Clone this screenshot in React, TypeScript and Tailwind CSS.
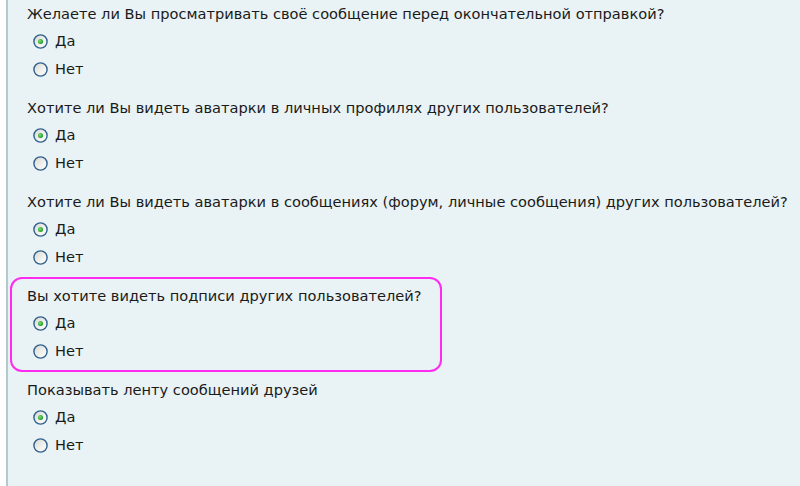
import React from 'react';

type Question = { text: string; highlight?: boolean };

const questions: Question[] = [
  { text: 'Желаете ли Вы просматривать своё сообщение перед окончательной отправкой?' },
  { text: 'Хотите ли Вы видеть аватарки в личных профилях других пользователей?' },
  { text: 'Хотите ли Вы видеть аватарки в сообщениях (форум, личные сообщения) других пользователей?' },
  { text: 'Вы хотите видеть подписи других пользователей?', highlight: true },
  { text: 'Показывать ленту сообщений друзей' },
];

function Radio({ checked }: { checked?: boolean }) {
  return (
    <svg width="15" height="15" viewBox="0 0 15 15" className="shrink-0">
      <defs>
        <linearGradient id="rfill" x1="0" y1="0" x2="1" y2="1">
          <stop offset="0%" stopColor="#d6d6d0" />
          <stop offset="60%" stopColor="#f2f2ef" />
          <stop offset="100%" stopColor="#ffffff" />
        </linearGradient>
        <radialGradient id="rdot" cx="0.4" cy="0.4" r="0.6">
          <stop offset="0%" stopColor="#7fe07f" />
          <stop offset="100%" stopColor="#1c9a1c" />
        </radialGradient>
      </defs>
      <circle cx="7.5" cy="7.5" r="6.6" fill="url(#rfill)" stroke="#2f5f8e" strokeWidth="1.4" />
      {checked && <circle cx="7.5" cy="7.5" r="2.5" fill="url(#rdot)" />}
    </svg>
  );
}

function Option({ label, checked }: { label: string; checked?: boolean }) {
  return (
    <div className="h-[28px] flex items-center gap-[7px] ml-[6px]">
      <Radio checked={checked} />
      <span>{label}</span>
    </div>
  );
}

export default function App() {
  return (
    <div className="w-[800px] h-[486px] overflow-hidden bg-white pl-[6px]">
      <div
        className="h-full bg-[#e9f2f4] border-l-2 border-[#b3c9ce] pl-[2px] text-[14.6px] text-[#1a1a1a]"
        style={{ fontFamily: '"DejaVu Sans", Verdana, sans-serif' }}
      >
        {questions.map((q, i) => (
          <div
            key={i}
            className={
              q.highlight
                ? 'w-[432px] -mt-[5px] mb-[4px] pt-[3px] pb-[5px] pl-[15px] border-2 border-[#ff2bf0] rounded-[12px]'
                : 'mb-[11px] pl-[15px] border-l-2 border-transparent'
            }
          >
            <div className="h-[27px] flex items-center whitespace-nowrap">{q.text}</div>
            <Option label="Да" checked />
            <Option label="Нет" />
          </div>
        ))}
      </div>
    </div>
  );
}
